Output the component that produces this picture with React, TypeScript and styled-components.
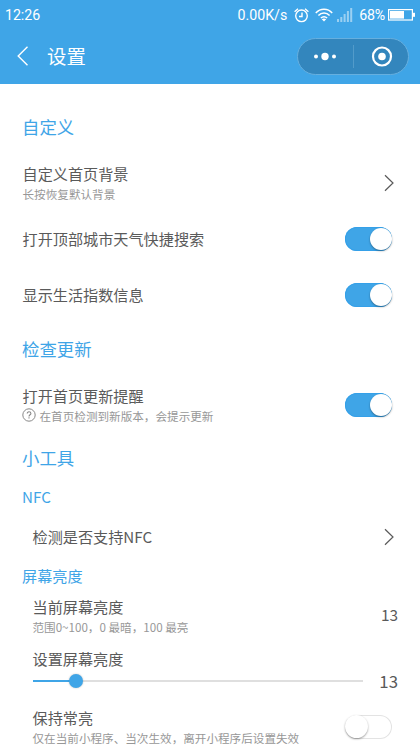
import React from "react";
import styled, { createGlobalStyle } from "styled-components";

const BLUE = "#3fa5e7";

const GlobalStyle = createGlobalStyle`
  * { box-sizing: border-box; }
  html, body { margin: 0; padding: 0; background: #fff; overflow: hidden; }
  body { font-family: "Noto Sans CJK SC", sans-serif; }
`;

const Screen = styled.div`
  width: 420px;
  height: 747px;
  overflow: hidden;
  background: #fff;
  color: #5a5a5a;
`;

const Header = styled.header`
  height: 84px;
  background: ${BLUE};
  color: #fff;
`;

const StatusBar = styled.div`
  height: 28px;
  padding: 2px 5px 0;
  display: flex;
  align-items: center;
  font: 14.2px/26px Roboto, sans-serif;
`;

const Clock = styled.span`
  flex: 1;
  letter-spacing: -0.05px;
`;

const StatusIcon = styled.svg<{ $gap: number }>`
  display: block;
  flex: none;
  margin-left: ${(p) => p.$gap}px;
`;

const Percent = styled.span`
  margin-left: 6px;
  letter-spacing: -0.2px;
`;

const NavBar = styled.div`
  height: 56px;
  padding: 0 11px 0 17px;
  display: flex;
  align-items: center;
`;

const NavTitle = styled.h1`
  flex: 1;
  margin: 0 0 0 18px;
  font-size: 19.4px;
  line-height: 28px;
  font-weight: 400;
`;

const Capsule = styled.div`
  width: 112px;
  height: 37px;
  border: 1px solid #66afdf;
  border-radius: 19px;
  background: #3386bd;
`;

const Content = styled.main`
  padding: 29px 22px 0;
`;

const Section = styled.h2<{ $height: number }>`
  margin: 0;
  height: ${(p) => p.$height}px;
  line-height: ${(p) => p.$height - 2}px;
  font-size: 17.4px;
  font-weight: 400;
  color: ${BLUE};
`;

const SubSection = styled.h3<{ $height: number }>`
  margin: 0;
  height: ${(p) => p.$height}px;
  line-height: ${(p) => p.$height - 2}px;
  font-size: 15.15px;
  font-weight: 400;
  color: ${BLUE};
`;

const Row = styled.div<{ $height: number; $nested?: boolean; $top?: number }>`
  height: ${(p) => p.$height}px;
  padding-top: ${(p) => p.$top ?? 0}px;
  padding-left: ${(p) => (p.$nested ? 10.5 : 0.5)}px;
  display: flex;
  align-items: center;
  justify-content: space-between;
`;

const Label = styled.div`
  height: 22px;
  font-size: 15.15px;
  line-height: 21px;
  white-space: nowrap;
`;

const Hint = styled.div`
  height: 18px;
  display: flex;
  align-items: center;
  gap: 4px;
  font-size: 11.6px;
  line-height: 18px;
  white-space: nowrap;
  color: #979797;
`;

const Value = styled.span<{ $large?: boolean }>`
  height: 22px;
  font-size: ${(p) => (p.$large ? 16.8 : 15.4)}px;
  line-height: ${(p) => (p.$large ? 22 : 19)}px;
`;

const Track = styled.span<{ $on: boolean }>`
  width: 47px;
  height: 24px;
  margin-right: 6px;
  padding: ${(p) => (p.$on ? "0 0.5px" : "0")};
  display: flex;
  align-items: center;
  justify-content: ${(p) => (p.$on ? "flex-end" : "flex-start")};
  border-radius: 12px;
  background: ${(p) => (p.$on ? BLUE : "#fff")};
  box-shadow: inset 0 0 0 1px ${(p) => (p.$on ? "#35a0e8" : "#e3e3e3")};
`;

const Knob = styled.span<{ $on: boolean }>`
  width: ${(p) => (p.$on ? 22 : 23)}px;
  height: ${(p) => (p.$on ? 22 : 23)}px;
  border-radius: 50%;
  background: #fff;
  box-shadow: 0 1px 2px rgba(0, 0, 0, 0.38);
`;

const SliderBlock = styled.div`
  height: 63px;
  padding: 5px 0 0 10.5px;
`;

const SliderRow = styled.div`
  height: 22px;
  display: flex;
  align-items: center;
  justify-content: space-between;
`;

const Rail = styled.div`
  width: 330px;
  height: 2px;
  display: flex;
  align-items: center;
  background: #dfdfdf;
`;

const Fill = styled.div`
  height: 2px;
  background: ${BLUE};
`;

const Thumb = styled.div`
  flex: none;
  width: 14px;
  height: 14px;
  margin-left: -6px;
  border-radius: 50%;
  background: ${BLUE};
  box-shadow: 0 0 2px rgba(0, 0, 0, 0.25);
`;

const Arrow = styled.svg`
  display: block;
  margin-right: 3px;
`;

const HelpMark = styled.svg`
  display: block;
  flex: none;
  margin: -2px 0 0 -1px;
`;

function Switch({ on }: { on: boolean }) {
  return (
    <Track $on={on} role="switch" aria-checked={on}>
      <Knob $on={on} />
    </Track>
  );
}

function Chevron() {
  return (
    <Arrow width="12" height="18" viewBox="0 0 12 18" fill="none" stroke="#5a5a5a" strokeWidth="1.2">
      <path d="M2 1.2 10 9 2 16.8" />
    </Arrow>
  );
}

function HelpIcon() {
  return (
    <HelpMark width="14" height="14" viewBox="0 0 14 14" fill="none" stroke="#888" strokeWidth="1">
      <circle cx="7" cy="7" r="6.2" />
      <path d="M5.2 5.6c0-1.1.7-1.8 1.8-1.8s1.9.6 1.9 1.6C8.9 6.7 7 6.8 7 8.4M7 9.3v1.1" strokeWidth="1.1" />
    </HelpMark>
  );
}

function AlarmIcon() {
  return (
    <StatusIcon $gap={7} width="15" height="15" viewBox="0 0 15 15" fill="none" stroke="#fff" strokeWidth="1.4">
      <circle cx="7.5" cy="7.8" r="5.8" />
      <path d="M.6 3.7 4 .8M14.4 3.7 11 .8M8 4.6v3.9H5" />
    </StatusIcon>
  );
}

function WifiIcon() {
  return (
    <StatusIcon $gap={6} width="18" height="14" viewBox="0 0 18 14" fill="none" stroke="#fff" strokeWidth="1.5">
      <path d="M.8 4.9C5.3.1 12.7.1 17.2 4.9M3.4 7.5c3.2-3.4 8-3.4 11.2 0M5.9 10c1.8-1.8 4.4-1.8 6.2 0" />
      <path d="M6.8 11.2c1.3-1 3.1-1 4.4 0L9 13.6z" fill="#fff" stroke="none" />
    </StatusIcon>
  );
}

function SignalIcon() {
  return (
    <StatusIcon $gap={4} width="16" height="14" viewBox="0 0 16 14" fill="#fff" fillOpacity=".48">
      <rect x="0" y="11" width="2" height="3" />
      <rect x="3.3" y="9" width="2" height="5" />
      <rect x="6.6" y="6" width="2" height="8" />
      <rect x="9.9" y="3" width="2" height="11" />
      <rect x="13.2" y="0" width="2" height="14" />
    </StatusIcon>
  );
}

function BatteryIcon() {
  return (
    <StatusIcon $gap={3} width="27" height="12" viewBox="0 0 27 12" fill="#fff">
      <rect x=".6" y=".6" width="23.8" height="10.4" fill="none" stroke="#fff" strokeWidth="1.2" />
      <rect x="2" y="2" width="14" height="7.6" />
      <rect x="25" y="3.8" width="2" height="4" />
    </StatusIcon>
  );
}

export default function App() {
  const brightness = 13;
  return (
    <Screen>
      <GlobalStyle />
      <Header>
        <StatusBar>
          <Clock>12:26</Clock>
          <span>0.00K/s</span>
          <AlarmIcon />
          <WifiIcon />
          <SignalIcon />
          <Percent>68%</Percent>
          <BatteryIcon />
        </StatusBar>
        <NavBar>
          <svg width="12" height="20" viewBox="0 0 12 20" fill="none" stroke="#fff" strokeWidth="1.4">
            <path d="M10.5.8 1.2 10l9.3 9.2" />
          </svg>
          <NavTitle>设置</NavTitle>
          <Capsule>
            <svg width="110" height="35" viewBox="0 0 110 35" fill="#fff">
              <circle cx="18" cy="17.5" r="2" />
              <circle cx="27" cy="17.5" r="3.7" />
              <circle cx="36" cy="17.5" r="2" />
              <path d="M55.5 6v23" stroke="#529bca" />
              <circle cx="84" cy="17.5" r="9" fill="none" stroke="#fff" strokeWidth="2.2" />
              <circle cx="84" cy="17.5" r="3.8" />
            </svg>
          </Capsule>
        </NavBar>
      </Header>
      <Content>
        <Section $height={29}>自定义</Section>
        <Row $height={69} $top={13}>
          <div>
            <Label>自定义首页背景</Label>
            <Hint>长按恢复默认背景</Hint>
          </div>
          <Chevron />
        </Row>
        <Row $height={56}>
          <Label>打开顶部城市天气快捷搜索</Label>
          <Switch on />
        </Row>
        <Row $height={56}>
          <Label>显示生活指数信息</Label>
          <Switch on />
        </Row>
        <Section $height={53}>检查更新</Section>
        <Row $height={58}>
          <div>
            <Label>打开首页更新提醒</Label>
            <Hint>
              <HelpIcon />
              在首页检测到新版本，会提示更新
            </Hint>
          </div>
          <Switch on />
        </Row>
        <Section $height={50}>小工具</Section>
        <SubSection $height={26}>NFC</SubSection>
        <Row $height={54} $nested>
          <Label>检测是否支持NFC</Label>
          <Chevron />
        </Row>
        <SubSection $height={24}>屏幕亮度</SubSection>
        <Row $height={55} $nested>
          <div>
            <Label>当前屏幕亮度</Label>
            <Hint>范围0~100，0 最暗，100 最亮</Hint>
          </div>
          <Value>{brightness}</Value>
        </Row>
        <SliderBlock>
          <Label>设置屏幕亮度</Label>
          <SliderRow>
            <Rail>
              <Fill style={{ width: `${brightness}%` }} />
              <Thumb />
            </Rail>
            <Value $large>{brightness}</Value>
          </SliderRow>
        </SliderBlock>
        <Row $height={41} $nested>
          <div>
            <Label>保持常亮</Label>
            <Hint>仅在当前小程序、当次生效，离开小程序后设置失效</Hint>
          </div>
          <Switch on={false} />
        </Row>
      </Content>
    </Screen>
  );
}
